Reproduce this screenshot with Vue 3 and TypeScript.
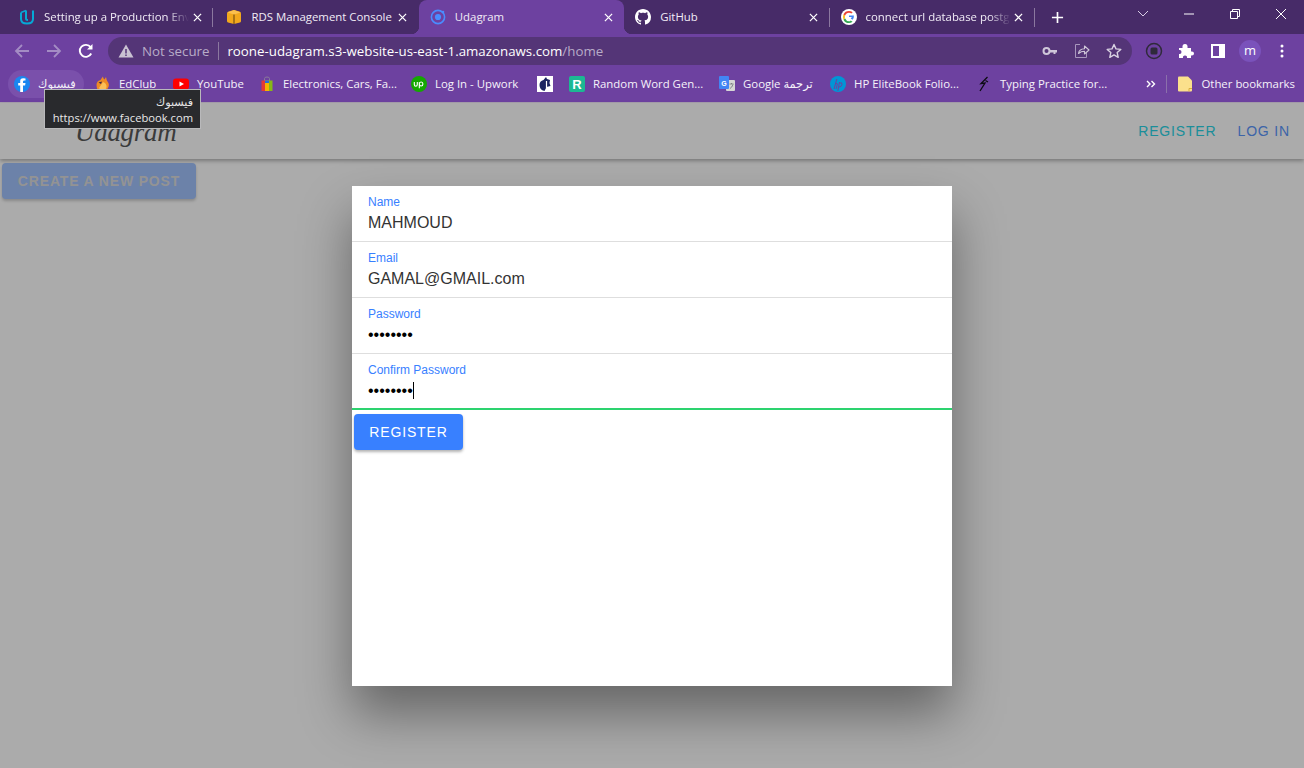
<script setup lang="ts">
import { ref } from 'vue'

interface Tab {
  title: string
  icon: string
  active?: boolean
  sep?: boolean
  fade?: boolean
}

interface Bookmark {
  label: string
  icon: string
  width: number
  hover?: boolean
}

interface Field {
  label: string
  value: string
  type: string
}

const tabs: Tab[] = [
  { title: 'Setting up a Production Environment', icon: 'udacity', sep: true, fade: true },
  { title: 'RDS Management Console', icon: 'aws' },
  { title: 'Udagram', icon: 'ionic', active: true },
  { title: 'GitHub', icon: 'github', sep: true },
  { title: 'connect url database postgres', icon: 'google', sep: true, fade: true },
]

const bookmarks: Bookmark[] = [
  { label: 'فيسبوك', icon: 'facebook', width: 38, hover: true },
  { label: 'EdClub', icon: 'edclub', width: 38 },
  { label: 'YouTube', icon: 'youtube', width: 46 },
  { label: 'Electronics, Cars, Fa...', icon: 'bag', width: 112 },
  { label: 'Log In - Upwork', icon: 'upwork', width: 86 },
  { label: '', icon: 'glyph', width: 0 },
  { label: 'Random Word Gen...', icon: 'random', width: 110 },
  { label: 'Google ترجمة', icon: 'translate', width: 71 },
  { label: 'HP EliteBook Folio...', icon: 'hp', width: 106 },
  { label: 'Typing Practice for...', icon: 'typing', width: 107 },
]

const fields = ref<Field[]>([
  { label: 'Name', value: 'MAHMOUD', type: 'text' },
  { label: 'Email', value: 'GAMAL@GMAIL.com', type: 'text' },
  { label: 'Password', value: 'password', type: 'password' },
  { label: 'Confirm Password', value: 'password', type: 'password' },
])
</script>

<template>
  <div class="window">
    <div class="tabstrip">
      <div
        v-for="tab in tabs"
        :key="tab.title"
        class="tab"
        :class="{ active: tab.active, sep: tab.sep }"
      >
        <svg class="favicon" viewBox="0 0 16 16">
          <template v-if="tab.icon === 'udacity'">
            <path d="M2 3.500v6.500q0 4.500 6 4.500t6-4.500V1.500" fill="none" stroke="#06a9d6" stroke-width="2" />
            <path d="M7 1.500v8q0 1.500 2 1.500" fill="none" stroke="#06a9d6" stroke-width="2" />
            <path d="M2 3.500 7 1.500" fill="none" stroke="#06a9d6" stroke-width="1.500" />
          </template>
          <template v-else-if="tab.icon === 'aws'">
            <path d="M1 4.500q0-1.500 1.500-2L8 1l5.500 1.500q1.500.5 1.500 2V12q0 1-1 1.500L8 15l-6-1.500q-1-.5-1-1.500z" fill="#f2a81d" />
            <path d="M1.500 3.500 8 5.500l6.500-2L8 1z" fill="#fbc04e" />
            <path d="M8 5.500V15" stroke="#6f4a12" stroke-width="1.100" />
          </template>
          <template v-else-if="tab.icon === 'ionic'">
            <circle cx="8" cy="8" r="6.600" fill="none" stroke="#4a8cff" stroke-width="1.600" />
            <circle cx="8" cy="8" r="3.100" fill="#4a8cff" />
            <circle cx="13" cy="3" r="1.300" fill="#4a8cff" />
          </template>
          <path
            v-else-if="tab.icon === 'github'"
            fill="#fff"
            d="M8 0C3.58 0 0 3.58 0 8c0 3.54 2.29 6.53 5.47 7.59.4.07.55-.17.55-.38 0-.19-.01-.82-.01-1.49-2.01.37-2.53-.49-2.69-.94-.09-.23-.48-.94-.82-1.13-.28-.15-.68-.52-.01-.53.63-.01 1.08.58 1.23.82.72 1.21 1.87.87 2.33.66.07-.52.28-.87.51-1.07-1.78-.2-3.64-.89-3.64-3.95 0-.87.31-1.59.82-2.15-.08-.2-.36-1.02.08-2.12 0 0 .67-.21 2.2.82.64-.18 1.32-.27 2-.27.68 0 1.36.09 2 .27 1.53-1.04 2.2-.82 2.2-.82.44 1.1.16 1.92.08 2.12.51.56.82 1.27.82 2.15 0 3.07-1.87 3.75-3.65 3.95.29.25.54.73.54 1.48 0 1.07-.01 1.93-.01 2.2 0 .21.15.46.55.38A8.013 8.013 0 0016 8c0-4.42-3.58-8-8-8z"
          />
          <template v-else>
            <circle cx="8" cy="8" r="8" fill="#fff" />
            <path d="M8 6.600h4.900q.2 2.700-1.300 4.200L9.700 9.400q.9-.6 1.100-1.500H8z" fill="#4285f4" />
            <path d="M4 9.300q1.300 3 4 3 1 0 1.700-.9l1.900 1.400Q10 14.100 8 14.100q-4 0-5.500-3.400z" fill="#34a853" />
            <path d="M2.500 5.300Q1.600 8 2.500 10.700L4 9.300Q3.500 8 4 6.700z" fill="#fbbc05" />
            <path d="M2.500 5.300Q4 1.900 8 1.900q2.100 0 3.700 1.400L10.400 4.600Q9.300 3.700 8 3.700 5.200 3.700 4 6.700z" fill="#ea4335" />
          </template>
        </svg>
        <span class="tab-title" :class="{ fade: tab.fade }">{{ tab.title }}</span>
        <svg class="tab-close" viewBox="0 0 10 10">
          <path d="M1 1l8 8M9 1l-8 8" stroke="#fff" stroke-width="1.400" />
        </svg>
      </div>
      <svg class="new-tab" viewBox="0 0 14 14">
        <path d="M7 1v12M1 7h12" stroke="#fff" stroke-width="1.800" />
      </svg>
      <div class="win-controls">
        <span class="win-btn chevron">
          <svg width="12" height="8" viewBox="0 0 12 8"><path d="M1 1l5 5 5-5" fill="none" stroke="#d9cfe6" stroke-width="1" /></svg>
        </span>
        <span class="win-btn">
          <svg width="12" height="12" viewBox="0 0 12 12"><path d="M1 6h10" stroke="#fff" stroke-width="1" /></svg>
        </span>
        <span class="win-btn">
          <svg width="12" height="12" viewBox="0 0 12 12"><path d="M1.500 3.500h7v7h-7zM3.500 3.500v-2h7v7h-2" fill="none" stroke="#fff" stroke-width="1" /></svg>
        </span>
        <span class="win-btn">
          <svg width="12" height="12" viewBox="0 0 12 12"><path d="M1 1l10 10M11 1L1 11" stroke="#fff" stroke-width="1" /></svg>
        </span>
      </div>
    </div>

    <div class="toolbar">
      <span class="tool">
        <svg width="16" height="16" viewBox="0 0 16 16"><path d="M15 8H2M8 2 2 8l6 6" fill="none" stroke="#a48cc4" stroke-width="1.800" /></svg>
      </span>
      <span class="tool">
        <svg width="16" height="16" viewBox="0 0 16 16"><path d="M1 8h13M8 2l6 6-6 6" fill="none" stroke="#a48cc4" stroke-width="1.800" /></svg>
      </span>
      <span class="tool">
        <svg width="16" height="16" viewBox="0 0 16 16"><path d="M13.200 10.500A6 6 0 1 1 12.600 4.200" fill="none" stroke="#fff" stroke-width="1.900" /><path d="M14.500 1v5.500H9z" fill="#fff" /></svg>
      </span>
      <div class="omnibox">
        <svg class="warn" width="16" height="16" viewBox="0 0 16 16">
          <path d="M8 1.500 15.500 14.500H.5z" fill="#c9c2d2" />
          <path d="M8 6v4.500M8 11.500v1.500" stroke="#543577" stroke-width="1.500" />
        </svg>
        <span class="not-secure">Not secure</span>
        <span class="omni-sep"></span>
        <span class="url">roone-udagram.s3-website-us-east-1.amazonaws.com<span class="url-path">/home</span></span>
        <span class="omni-icons">
          <span class="tool">
            <svg width="16" height="16" viewBox="0 0 16 16"><circle cx="4.500" cy="8" r="3" fill="none" stroke="#cfc7d9" stroke-width="2" /><path d="M7 7h8v2.500h-1.500V11h-2V9.500H7z" fill="#cfc7d9" /></svg>
          </span>
          <span class="tool">
            <svg width="16" height="16" viewBox="0 0 16 16"><path d="M6 1.500H1.500v13h11V10" fill="none" stroke="#a897bd" stroke-width="1" /><path d="M4.500 10.500q.5-4.500 6-4.800V3l4.500 4-4.500 4V8.300q-3.500 0-6 2.200z" fill="none" stroke="#cfc7d9" stroke-width="1.100" stroke-linejoin="round" /></svg>
          </span>
          <span class="tool">
            <svg width="16" height="16" viewBox="0 0 16 16"><path d="M8 1.500l2 4.400 4.800.5-3.600 3.200 1 4.700L8 11.900l-4.200 2.400 1-4.700L1.200 6.400 6 5.900z" fill="none" stroke="#d9d2e2" stroke-width="1.400" stroke-linejoin="round" /></svg>
          </span>
        </span>
      </div>
      <span class="tool">
        <svg width="18" height="18" viewBox="0 0 18 18"><circle cx="9" cy="9" r="7.500" fill="none" stroke="#2f2a3a" stroke-width="1.500" /><rect x="5.500" y="5.500" width="7" height="7" rx="1.500" fill="#2f2a3a" /></svg>
      </span>
      <span class="tool">
        <svg width="16" height="16" viewBox="0 0 16 16"><path d="M1 5h3.500q-.5-4 2.500-4t2.500 4H13v3.500q3-.5 3 2t-3 2V15H9q.5-2.500-2-2.500T5 15H1v-4q2.500.5 2.500-2T1 7z" fill="#fff" /></svg>
      </span>
      <span class="tool">
        <svg width="14" height="14" viewBox="0 0 14 14"><path d="M0 0h14v14H0z" fill="#fff" /><path d="M2 2h6v10H2z" fill="#6d41a0" /></svg>
      </span>
      <span class="tool"><span class="avatar">m</span></span>
      <span class="tool">
        <svg width="4" height="14" viewBox="0 0 4 14"><circle cx="2" cy="2" r="1.500" fill="#fff" /><circle cx="2" cy="7" r="1.500" fill="#fff" /><circle cx="2" cy="12" r="1.500" fill="#fff" /></svg>
      </span>
    </div>

    <div class="bookmarks">
      <div
        v-for="b in bookmarks"
        :key="b.icon"
        class="bookmark"
        :class="{ hover: b.hover }"
      >
        <svg class="bm-icon" viewBox="0 0 16 16">
          <template v-if="b.icon === 'facebook'">
            <circle cx="8" cy="8" r="8" fill="#1a86f0" />
            <path d="M9 16v-6.500h2.100l.4-2.400H9V5.700q0-1.200 1.300-1.200h1.200v-2q-3.900-.9-5 1.100-.3.7-.3 1.900v1.600H4.200v2.400h2V16z" fill="#fff" />
          </template>
          <template v-else-if="b.icon === 'edclub'">
            <path d="M1.500 9q0-4 4-5 1-2 2.500-3.500 0 2 1.500 3L11 1q.5 3 1.500 4.500 2.500 3 .5 6.500-2 3.500-6 3.500-5.500 0-5.500-6.500z" fill="#ef8a24" />
            <path d="M8 6q3.500 1 3.500 4.500T8 14.500q-2.500 0-4-2.500z" fill="#fbbf57" />
            <path d="M3.500 6.500 7 5.500 6 8z" fill="#3a2a4a" />
          </template>
          <template v-else-if="b.icon === 'youtube'">
            <rect y="2.500" width="16" height="11" rx="3" fill="#f00" />
            <path d="M6.500 5.500v5L11 8z" fill="#fff" />
          </template>
          <template v-else-if="b.icon === 'bag'">
            <path d="M5.500 5V2.500Q5.500 1 8 1t2.500 1.500V5" fill="none" stroke="#8a7a9a" stroke-width="1" />
            <path d="M2.500 4.500H6V15H2.500z" fill="#e53935" />
            <path d="M6 4.500h4V15H6z" fill="#f5b400" />
            <path d="M10 4.500h3.500V15H10z" fill="#86b817" />
            <path d="M6 4.500h4V7H6z" fill="#2a6fd6" />
          </template>
          <template v-else-if="b.icon === 'upwork'">
            <circle cx="8" cy="8" r="8" fill="#14a800" />
            <path d="M3.300 6v2.500q0 1.700 1.500 1.700t1.500-1.700V6M8.300 6.200v6M8.300 8q0-2 1.800-2t1.800 2-1.800 2-1.800-2" fill="none" stroke="#fff" stroke-width="1.100" />
          </template>
          <template v-else-if="b.icon === 'glyph'">
            <rect width="16" height="16" fill="#fff" />
            <path d="M2.500 9q0-4 4-5l2.500-3 1 2 3 1-.5 3 1 3-4 1-2 4q-5-1-5-6z" fill="#1a2360" />
            <path d="M9.500 5v7" stroke="#fff" stroke-width="1.200" />
          </template>
          <template v-else-if="b.icon === 'random'">
            <rect width="16" height="16" rx="2" fill="#1cb893" />
            <text x="8" y="13" text-anchor="middle" class="bm-r">R</text>
          </template>
          <template v-else-if="b.icon === 'translate'">
            <rect x="7" y="4" width="9" height="11" rx="1" fill="#d5d5d5" />
            <rect width="10" height="13" rx="1" fill="#4285f4" />
            <text x="5" y="9.500" text-anchor="middle" class="bm-g">G</text>
            <path d="M10.500 8h4M12.500 7v1M11 12.500q2-1 3-4" fill="none" stroke="#6f7378" stroke-width=".8" />
          </template>
          <template v-else-if="b.icon === 'hp'">
            <circle cx="8" cy="8" r="8" fill="#0096d6" />
            <path d="M6.800 3 4 13M5.400 8q2-1.500 2 0L6 13M9.500 6 7.800 15M9.500 7q3-1 2.500 1.500t-3 2.500" fill="none" stroke="#6d41a0" stroke-width="1" />
          </template>
          <path v-else d="M11.500 1 5 7.500l4-.5L4 15M9.500 4.500 12 6" fill="none" stroke="#0c0c12" stroke-width="1.300" />
        </svg>
        <span v-if="b.label" class="bm-label" :style="{ width: b.width + 'px' }">{{ b.label }}</span>
      </div>
      <span class="bm-more">
        <svg width="10" height="8" viewBox="0 0 10 8"><path d="M1 1l3 3-3 3M5.500 1l3 3-3 3" fill="none" stroke="#fff" stroke-width="1.400" /></svg>
      </span>
      <span class="bm-sep"></span>
      <div class="bookmark other">
        <svg class="folder" viewBox="0 0 14 16">
          <path d="M0 1.500q0-1 1-1h9l4 4v10q0 1-1 1H1q-1 0-1-1z" fill="#fbe08c" />
          <path d="M11 15.500v-3h3" fill="none" stroke="#d9ad40" stroke-width="1" />
        </svg>
        <span class="bm-label">Other bookmarks</span>
      </div>
    </div>

    <div class="page">
      <header class="app-header">
        <div class="logo">Udagram</div>
        <nav class="app-nav">
          <a class="nav-register">REGISTER</a>
          <a class="nav-login">LOG IN</a>
        </nav>
      </header>
      <button class="create-post" disabled>CREATE A NEW POST</button>

      <div class="backdrop">
        <form class="modal" @submit.prevent>
          <div v-for="(f, i) in fields" :key="f.label" class="item" :class="{ focused: i === fields.length - 1 }">
            <label class="item-label">{{ f.label }}</label>
            <input class="item-input" :type="f.type" :value="f.value" readonly />
            <span v-if="i === fields.length - 1" class="caret"></span>
          </div>
          <button class="register-btn" type="button">REGISTER</button>
        </form>
      </div>
    </div>

    <div class="tooltip">
      <div>فيسبوك</div>
      <div>https://www.facebook.com</div>
    </div>
  </div>
</template>

<style>
html,
body {
  margin: 0;
  background: #ababab;
}
</style>

<style scoped>
.window {
  position: relative;
  width: 1304px;
  height: 768px;
  overflow: hidden;
  display: flex;
  flex-direction: column;
  font-family: "Open Sans", "DejaVu Sans", sans-serif;
  font-size: 11.4px;
  color: #fff;
}

/* tab strip */
.tabstrip {
  height: 34px;
  flex: none;
  display: flex;
  align-items: stretch;
  padding-left: 8px;
  background: #472b68;
}

.tab {
  position: relative;
  width: 205.4px;
  flex: none;
  box-sizing: border-box;
  display: flex;
  align-items: center;
  padding: 0 8px 0 11px;
}

.tab:nth-child(2) {
  padding-left: 13px;
}

.tab.sep::after {
  content: "";
  position: absolute;
  right: 0;
  top: 8px;
  height: 19px;
  width: 1px;
  background: #8b789f;
}

.tab.active {
  background: #6d41a0;
  border-radius: 8px 8px 0 0;
}

.tab.active::before,
.tab.active::after {
  content: "";
  position: absolute;
  bottom: 0;
  width: 8px;
  height: 8px;
}

.tab.active::before {
  left: -8px;
  background: radial-gradient(circle at 0 0, transparent 8px, #6d41a0 8.5px);
}

.tab.active::after {
  right: -8px;
  background: radial-gradient(circle at 100% 0, transparent 8px, #6d41a0 8.5px);
}

.favicon {
  width: 16px;
  height: 16px;
  flex: none;
  margin-right: 9px;
}

.tab-title {
  flex: 1;
  min-width: 0;
  overflow: hidden;
  white-space: nowrap;
  color: #f1ecf6;
  padding-bottom: 1px;
}

.tab-title.fade {
  -webkit-mask-image: linear-gradient(to right, #000 85%, transparent);
  mask-image: linear-gradient(to right, #000 85%, transparent);
}

.tab-close {
  width: 9px;
  height: 9px;
  flex: none;
  margin: 0 3.5px;
}

.new-tab {
  width: 13px;
  height: 13px;
  align-self: center;
  margin-left: 16px;
}

.win-controls {
  margin-left: auto;
  display: flex;
}

.win-btn {
  width: 46px;
  height: 28px;
  display: flex;
  align-items: center;
  justify-content: center;
}

.win-btn.chevron {
  width: 32px;
  margin-right: 7px;
}

/* toolbar */
.toolbar {
  height: 34px;
  flex: none;
  box-sizing: border-box;
  display: flex;
  align-items: center;
  padding: 0 6px;
  background: #6d41a0;
}

.tool {
  width: 32px;
  height: 28px;
  flex: none;
  display: flex;
  align-items: center;
  justify-content: center;
}

.omnibox {
  flex: 1;
  height: 28px;
  margin: 0 6px;
  display: flex;
  align-items: center;
  padding: 0 2px 0 10px;
  border-radius: 14px;
  background: #543577;
  font-size: 13.3px;
}

.warn {
  flex: none;
  margin-right: 8px;
}

.not-secure {
  color: #b8acc8;
}

.omni-sep {
  width: 1px;
  height: 18px;
  margin: 0 8px 0 9px;
  background: #8b789f;
}

.url {
  color: #fff;
  white-space: nowrap;
}

.url-path {
  color: #b8acc8;
}

.omni-icons {
  margin-left: auto;
  display: flex;
}

.avatar {
  width: 22px;
  height: 22px;
  border-radius: 50%;
  background: #7a52bb;
  display: flex;
  align-items: center;
  justify-content: center;
  font-size: 13px;
  line-height: 1;
  padding-bottom: 1px;
  box-sizing: border-box;
}

/* bookmarks bar */
.bookmarks {
  height: 34px;
  flex: none;
  box-sizing: border-box;
  display: flex;
  align-items: center;
  gap: 2px;
  padding: 0 9px 2px 8px;
  background: #6d41a0;
}

.bookmark {
  height: 28px;
  flex: none;
  display: flex;
  align-items: center;
  padding: 0 8px 0 6px;
  border-radius: 14px;
}

.bookmark.hover {
  margin-right: 3px;
  background: #7a50ab;
}

.bm-icon {
  width: 16px;
  height: 16px;
  flex: none;
}

.bm-label {
  margin-left: 8px;
  padding-bottom: 1px;
  white-space: nowrap;
  color: #f6f2fa;
}

.bm-r {
  font: 700 13px "Liberation Sans", sans-serif;
  fill: #fff;
}

.bm-g {
  font: 700 7px "Liberation Sans", sans-serif;
  fill: #fff;
}

.bm-more {
  margin-left: auto;
  width: 10px;
  display: flex;
  margin-right: 8px;
}

.bm-sep {
  width: 1px;
  height: 18px;
  background: #8b70ab;
  margin-right: 3px;
}

.bookmark.other {
  padding: 0 0 0 6px;
}

.folder {
  width: 14px;
  height: 16px;
  flex: none;
  margin-right: 1px;
}

/* page behind the modal */
.page {
  position: relative;
  flex: 1;
  min-height: 0;
  background: #fff;
  border-top: 1px solid #a8a0ae;
  font-family: "Liberation Sans", Arial, sans-serif;
}

.app-header {
  height: 56px;
  box-sizing: border-box;
  display: flex;
  align-items: center;
  justify-content: space-between;
  padding: 0 14px 0 75px;
  box-shadow: 0 2px 4px rgba(0, 0, 0, 0.3);
}

.logo {
  font: italic 27px "Liberation Serif", serif;
  color: #585858;
  letter-spacing: -0.3px;
  padding-top: 2px;
}

.app-nav {
  display: flex;
  gap: 21px;
  font-size: 14px;
  letter-spacing: 0.84px;
}

.nav-register {
  color: #29d4e6;
}

.nav-login {
  color: #5a95fb;
}

.create-post {
  display: block;
  width: 194px;
  height: 36px;
  margin: 4px 0 0 2px;
  padding: 0;
  border: 0;
  border-radius: 4px;
  background: #a2c2fc;
  color: #dcdcdc;
  font: 700 14px "Liberation Sans", Arial, sans-serif;
  letter-spacing: 0.84px;
  box-shadow: 0 2px 3px rgba(0, 0, 0, 0.2);
}

.backdrop {
  position: absolute;
  inset: 0;
  background: rgba(0, 0, 0, 0.33);
  display: flex;
  align-items: flex-start;
  justify-content: center;
  padding-top: 83px;
}

.modal {
  width: 600px;
  height: 500px;
  background: #fff;
  box-shadow: 0 28px 48px rgba(0, 0, 0, 0.4);
}

.item {
  position: relative;
  height: 56px;
  box-sizing: border-box;
  padding: 9px 16px 0;
  border-bottom: 1px solid #dedede;
}

.item.focused {
  height: 56px;
  border-bottom: 2px solid #2dd36f;
  margin-bottom: 4px;
}

.item-label {
  display: block;
  height: 14px;
  line-height: 14px;
  font-size: 12px;
  color: #3880ff;
}

.item-input {
  display: block;
  width: 100%;
  height: 26px;
  margin-top: 1px;
  padding: 0;
  border: 0;
  outline: 0;
  background: transparent;
  font: 16px "Liberation Sans", Arial, sans-serif;
  color: #333;
}

.item-input[type="password"] {
  color: #000;
}

.caret {
  position: absolute;
  left: 61px;
  top: 28px;
  width: 1px;
  height: 17px;
  background: #000;
}

.register-btn {
  display: block;
  width: 109px;
  height: 36px;
  margin-left: 2px;
  padding: 0;
  border: 0;
  border-radius: 4px;
  background: #3880ff;
  color: #fff;
  font: 14px "Liberation Sans", Arial, sans-serif;
  letter-spacing: 0.84px;
  box-shadow: 0 2px 3px rgba(0, 0, 0, 0.3);
}

/* browser tooltip over the bookmark */
.tooltip {
  position: absolute;
  left: 44px;
  top: 89px;
  width: 157px;
  height: 40px;
  box-sizing: border-box;
  padding: 4px 7px 0;
  background: #292a2d;
  border: 1px solid #b9b9bb;
  text-align: right;
  line-height: 16px;
  font-size: 11.2px;
  color: #e8e8e8;
  white-space: nowrap;
}
</style>
